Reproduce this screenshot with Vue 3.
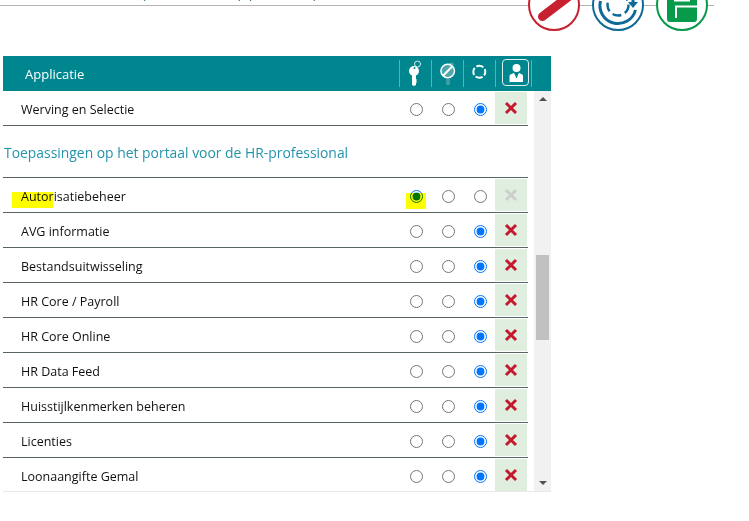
<script setup>
const rows = [
  'AVG informatie',
  'Bestandsuitwisseling',
  'HR Core / Payroll',
  'HR Core Online',
  'HR Data Feed',
  'Huisstijlkenmerken beheren',
  'Licenties',
  'Loonaangifte Gemal'
]
</script>

<template>
  <div class="page">
    <div class="topbar">
      <div class="clipped">
        <span class="p1">(</span><span class="p2">)</span><span class="p3">(</span><span>)</span>
      </div>
      <div class="round-btn red">
        <svg width="48" height="48" viewBox="0 0 48 48">
          <path d="M12.5 35.5 L40 14.5" stroke="#c8202f" stroke-width="9" stroke-linecap="round" fill="none" />
        </svg>
      </div>
      <div class="round-btn blue">
        <svg width="48" height="48" viewBox="0 0 48 48">
          <path d="M6.5 20 A17.5 17.5 0 0 0 41.5 29" stroke="#0f6a9a" stroke-width="3" fill="none" />
          <circle cx="24" cy="24" r="10.5" stroke="#0f6a9a" stroke-width="2.5" stroke-dasharray="9 4" fill="none" />
          <path d="M34 21 h10 l-5 6 z M37.5 15 h3 v7 h-3 z" fill="#0f6a9a" />
        </svg>
      </div>
      <div class="round-btn green">
        <svg width="48" height="48" viewBox="0 0 48 48">
          <rect x="9" y="4" width="30" height="37" rx="3" fill="#069a4a" />
          <rect x="16" y="18" width="16" height="2.5" fill="#fff" />
          <path d="M39 25.5 H18 V37" stroke="#fff" stroke-width="2" fill="none" />
        </svg>
      </div>
    </div>

    <div class="panel">
      <div class="head">
        <div class="head-title">Applicatie</div>
        <div class="head-icon">
          <svg width="17" height="27" viewBox="0 0 17 27">
            <circle cx="10.5" cy="4" r="3" stroke="#d5e9ea" stroke-width="1" fill="none" />
            <circle cx="7" cy="11" r="5" fill="#fff" />
            <path d="M5 14 H9 V19 L10 20 L9 21 L10 22 L9 23 V25 L7 26 L5 25 Z" fill="#fff" />
            <circle cx="7.5" cy="8" r="1" fill="#00868f" />
          </svg>
        </div>
        <div class="head-icon">
          <svg width="17" height="27" viewBox="0 0 17 27">
            <path d="M10 4 C13 2 15 4 13 7 M8 19 V24 H10 V19" stroke="#4fa6ab" stroke-width="1.5" fill="none" />
            <circle cx="8.7" cy="11" r="6.8" stroke="#fff" stroke-width="1.5" fill="#4fa6ab" />
            <path d="M4 15.7 L13.4 6.3" stroke="#fff" stroke-width="2" />
          </svg>
        </div>
        <div class="head-icon">
          <svg width="17" height="27" viewBox="0 0 17 27">
            <circle cx="8.3" cy="11.8" r="6" stroke="#fff" stroke-width="2" stroke-dasharray="7.4 2" stroke-dashoffset="-5.71" fill="none" />
          </svg>
        </div>
        <div class="head-icon last">
          <div class="user-box">
            <svg width="16" height="20" viewBox="0 0 16 20">
              <circle cx="8.5" cy="5" r="4" fill="#fff" />
              <path d="M1.5 19 V13 C1.5 11.5 3.5 11 6 10 L8.5 15 L11 10 C13.5 11 15 11.5 15 13 V19 Z" fill="#fff" />
              <path d="M7.7 12 h1.6 l-.3 3 h-1 z" fill="#00868f" />
            </svg>
          </div>
        </div>
      </div>

      <div class="body">
        <div class="list">
          <div class="row">
            <span class="name">Werving en Selectie</span>
            <span class="radio"><input type="radio" name="r0" /></span>
            <span class="radio"><input type="radio" name="r0" /></span>
            <span class="radio"><input type="radio" name="r0" checked /></span>
            <span class="del">
              <svg width="14" height="14" viewBox="0 0 14 14"><path d="M2 2 L12 12 M12 2 L2 12" stroke="#c4182c" stroke-width="3" /></svg>
            </span>
          </div>

          <div class="section">Toepassingen op het portaal voor de HR-professional</div>

          <div class="row">
            <span class="name">Autorisatiebeheer<i class="mark mark-text"></i></span>
            <span class="radio"><input type="radio" name="r1" checked /><i class="mark mark-radio"></i></span>
            <span class="radio"><input type="radio" name="r1" /></span>
            <span class="radio"><input type="radio" name="r1" /></span>
            <span class="del">
              <svg width="14" height="14" viewBox="0 0 14 14"><path d="M2 2 L12 12 M12 2 L2 12" stroke="#cdcfcd" stroke-width="3" /></svg>
            </span>
          </div>

          <div v-for="(row, i) in rows" :key="row" class="row">
            <span class="name">{{ row }}</span>
            <span class="radio"><input type="radio" :name="'s' + i" /></span>
            <span class="radio"><input type="radio" :name="'s' + i" /></span>
            <span class="radio"><input type="radio" :name="'s' + i" checked /></span>
            <span class="del">
              <svg width="14" height="14" viewBox="0 0 14 14"><path d="M2 2 L12 12 M12 2 L2 12" stroke="#c4182c" stroke-width="3" /></svg>
            </span>
          </div>
        </div>

        <div class="scrollbar">
          <span class="arrow up"></span>
          <span class="thumb"></span>
          <span class="arrow down"></span>
        </div>
      </div>
    </div>
  </div>
</template>

<style>
html, body {
  background: #fff;
  overflow: hidden;
}
</style>

<style scoped>
.page {
  width: 749px;
  height: 521px;
  overflow: hidden;
  font-family: "Open Sans", "Liberation Sans", sans-serif;
  font-size: 12px;
  color: #111;
}

.topbar {
  position: relative;
  display: flex;
  justify-content: flex-end;
  gap: 12px;
  width: 708px;
  height: 52px;
  margin-top: -21px;
}
.topbar::before {
  content: "";
  position: absolute;
  left: 0;
  top: 26px;
  width: 714px;
  height: 1px;
  background: #b4b4b4;
}
.clipped {
  position: absolute;
  left: 142px;
  top: 6px;
  display: flex;
  font-size: 13px;
  line-height: 18px;
  color: #2a6f80;
}
.p1 { width: 96px; }
.p2 { width: 10px; }
.p3 { width: 65px; }
.round-btn {
  position: relative;
  box-sizing: border-box;
  width: 52px;
  height: 52px;
  border-radius: 50%;
  border: 2px solid;
  background: #fff;
  overflow: hidden;
}
.round-btn svg {
  display: block;
}
.red { border-color: #c8202f; }
.blue { border-color: #0f6a9a; }
.green { border-color: #069a4a; }

.panel {
  width: 548px;
  margin: 25px 0 0 3px;
  border-bottom: 1px solid #e8e8e8;
}
.head {
  display: flex;
  align-items: flex-start;
  height: 35px;
  background: #00868f;
  color: #fff;
}
.head-title {
  flex: 1;
  padding-left: 22px;
  font-size: 13px;
  line-height: 37px;
}
.head-icon {
  display: flex;
  align-items: flex-start;
  justify-content: center;
  width: 32px;
  height: 27px;
  margin-top: 4px;
  border-left: 1px solid #5fb0b5;
  box-sizing: border-box;
}
.head-icon.last {
  width: 37px;
  margin-right: 19px;
  border-right: 1px solid #5fb0b5;
  justify-content: flex-start;
  padding-left: 6px;
}
.user-box {
  display: flex;
  align-items: center;
  justify-content: center;
  box-sizing: border-box;
  width: 27px;
  height: 27px;
  margin-top: -1px;
  border: 1.5px solid #dff0f0;
  border-radius: 4px;
}

.body {
  display: flex;
  height: 400px;
  overflow: hidden;
}
.list {
  width: 525px;
}
.row {
  display: flex;
  align-items: center;
  height: 35px;
  box-sizing: border-box;
  border-bottom: 1px solid #5a6463;
}
.name {
  position: relative;
  flex: 1;
  padding: 4px 0 0 18px;
  font-size: 12.5px;
  line-height: 18px;
}
.radio {
  position: relative;
  display: flex;
  align-items: center;
  box-sizing: border-box;
  width: 32px;
  padding: 3px 0 0 11px;
}
.radio input {
  margin: 0;
  width: 13px;
  height: 13px;
}
.del {
  display: flex;
  align-items: center;
  justify-content: center;
  width: 32px;
  height: 32px;
  margin-right: 1px;
  background: #e0eedf;
}
.section {
  height: 52px;
  box-sizing: border-box;
  padding: 17px 0 0 1px;
  font-size: 13.9px;
  color: #2394ab;
  border-bottom: 1px solid #5a6463;
}
.mark {
  position: absolute;
  background: #ffff00;
  mix-blend-mode: multiply;
}
.mark-text {
  left: 9px;
  top: 8px;
  width: 41px;
  height: 16px;
}
.mark-radio {
  left: 7px;
  top: 6px;
  width: 20px;
  height: 16px;
}

.scrollbar {
  position: relative;
  width: 17px;
  margin-left: 6px;
  background: #f1f1f1;
}
.thumb {
  position: absolute;
  left: 2px;
  top: 164px;
  width: 13px;
  height: 85px;
  background: #c1c1c1;
}
.arrow {
  position: absolute;
  left: 5px;
  width: 0;
  height: 0;
  border-left: 4px solid transparent;
  border-right: 4px solid transparent;
}
.arrow.up {
  top: 6px;
  border-bottom: 4px solid #505050;
}
.arrow.down {
  bottom: 6px;
  border-top: 4px solid #505050;
}
</style>
